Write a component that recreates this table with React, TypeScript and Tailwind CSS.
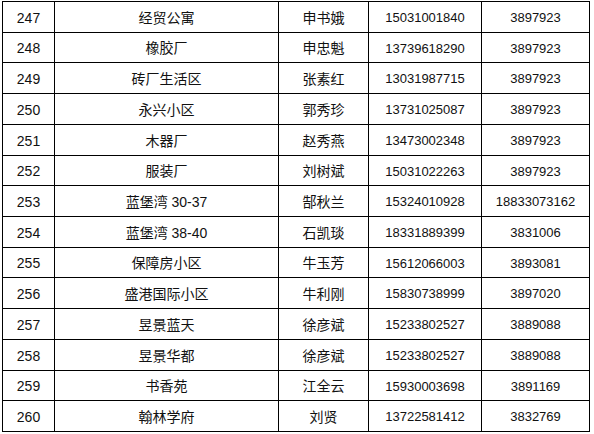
const rows = [
    ["247", "经贸公寓", "申书娥", "15031001840", "3897923"],
    ["248", "橡胶厂", "申忠魁", "13739618290", "3897923"],
    ["249", "砖厂生活区", "张素红", "13031987715", "3897923"],
    ["250", "永兴小区", "郭秀珍", "13731025087", "3897923"],
    ["251", "木器厂", "赵秀燕", "13473002348", "3897923"],
    ["252", "服装厂", "刘树斌", "15031022263", "3897923"],
    ["253", "蓝堡湾 30-37", "郜秋兰", "15324010928", "18833073162"],
    ["254", "蓝堡湾 38-40", "石凯琰", "18331889399", "3831006"],
    ["255", "保障房小区", "牛玉芳", "15612066003", "3893081"],
    ["256", "盛港国际小区", "牛利刚", "15830738999", "3897020"],
    ["257", "昱景蓝天", "徐彦斌", "15233802527", "3889088"],
    ["258", "昱景华都", "徐彦斌", "15233802527", "3889088"],
    ["259", "书香苑", "江全云", "15930003698", "3891169"],
    ["260", "翰林学府", "刘贤", "13722581412", "3832769"],
];

// row heights include the bottom rule
const heights = [
    "h-[31px]", "h-[30px]", "h-[31px]", "h-[31px]", "h-[31px]", "h-[30px]", "h-[31px]",
    "h-[31px]", "h-[30px]", "h-[31px]", "h-[31px]", "h-[31px]", "h-[30px]", "h-[31px]",
];

const widths = ["w-[52px]", "w-[224px]", "w-[90px]", "w-[113px]", "w-[108px]"];

export default function App() {
    return (
        <div className="w-[594px] h-[434px] bg-white overflow-hidden">
            <div
                className="ml-[2px] mt-[1px] w-[588px] border-l border-t border-black text-[#111]"
                style={{ fontFamily: '"Liberation Sans", "Noto Sans CJK SC", sans-serif' }}
            >
                {rows.map((row, i) => (
                    <div key={i} className={`flex ${heights[i]}`}>
                        {row.map((cell, j) => (
                            <div
                                key={j}
                                className={`${widths[j]} shrink-0 flex items-center justify-center border-r border-b border-black pt-[2px] ${
                                    j === 3 || j === 4 ? "text-[13px]" : "text-[14px]"
                                }`}
                            >
                                {cell}
                            </div>
                        ))}
                    </div>
                ))}
            </div>
        </div>
    );
}
